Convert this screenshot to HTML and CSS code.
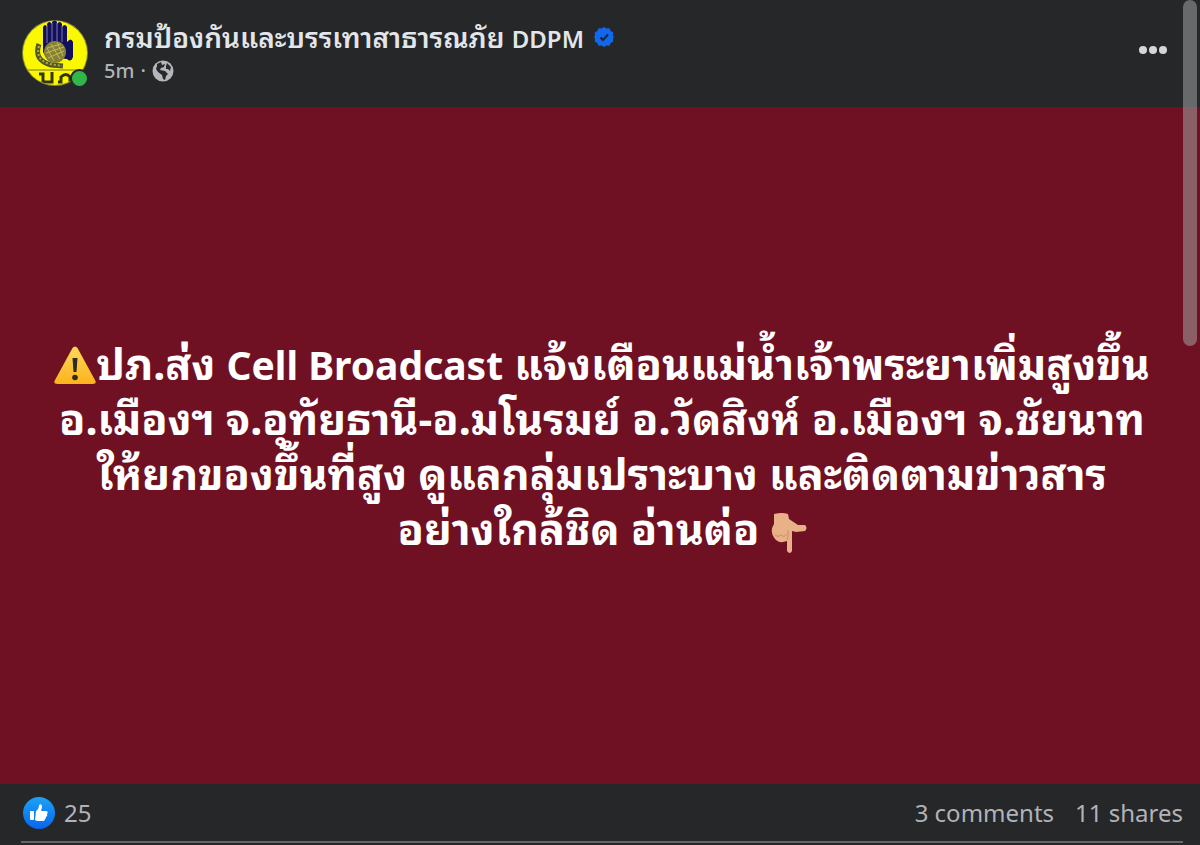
FILE: index.html
```
<!doctype html>
<html lang="th">
  <head>
    <meta charset="UTF-8" />
    <meta name="viewport" content="width=device-width, initial-scale=1.0" />
    <title>กรมป้องกันและบรรเทาสาธารณภัย DDPM</title>
    <link rel="stylesheet" href="styles.css">
  </head>
  <body>
    <article class="post">
      <header class="post-header">
        <a class="avatar" href="#" aria-label="DDPM">
          <svg viewBox="0 0 68 68" aria-hidden="true">
            <defs>
              <clipPath id="disc"><circle cx="34" cy="34" r="32" /></clipPath>
            </defs>
            <circle cx="34" cy="34" r="33" fill="#8b8a35" />
            <circle cx="34" cy="34" r="32" fill="#fbf900" />
            <!-- hand -->
            <path d="M22 33V8q2-4 4 0V5q2-4 5 0V3q3-3 5 0v2q3-4 5 0v3q3-4 5 0v15q4-5 6 0v15q-2 6-6 2L25 38z" fill="#12105c" />
            <path d="M26 6v18M31 4v19M36 4v18M41 7v16" stroke="#7c7ca8" stroke-width="1" />
            <!-- wreath -->
            <path d="M18 25q-6 16 12 21l12 1" fill="none" stroke="#55562a" stroke-width="5" />
            <path d="M18 27q-4 14 11 18l12 2" fill="none" stroke="#b3ad35" stroke-width="2" stroke-dasharray="2 2" />
            <circle cx="34" cy="33" r="11" fill="#85803a" />
            <path d="M26 29l14-4M25 34l18-6M27 39l16-7M30 25l9 15M36 23l6 14M26 29l7 13" stroke="#c4bb4d" stroke-width="1" />
            <g clip-path="url(#disc)">
              <path d="M3 51h62" stroke="#77762a" stroke-width="1" />
              <path d="M18 55h4v8h9V53M37 63h3v-5q5-5 9 0v6" fill="none" stroke="#35350b" stroke-width="3" />
            </g>
          </svg>
          <span class="online"></span>
        </a>
        <div class="author">
          <div class="name-row">
            <a class="name" href="#">กรมป้องกันและบรรเทาสาธารณภัย <span class="latin">DDPM</span></a>
            <svg class="verified" viewBox="0 0 20 20" aria-label="Verified">
              <path d="M10 0l2.500 1.500 3-.2 1.200 2.700 2.600 1.500-.3 3L20 10l-1 1.500.3 3-2.600 1.500-1.200 2.700-3-.2L10 20l-2.500-1.500-3 .2L3.300 16 .7 14.500l.3-3L0 10l1-1.500-.3-3L3.300 4l1.200-2.700 3 .2z" fill="#1267ed" />
              <path d="M6.500 10.500l2.500 2.500 5-5.500" fill="none" stroke="#202530" stroke-width="2" />
            </svg>
          </div>
          <div class="meta">
            <a href="#">5m</a>
            <span>·</span>
            <svg class="globe" viewBox="0 0 22 22" aria-label="Public">
              <circle cx="11" cy="11" r="10.500" fill="#b4b6ba" />
              <path d="M5 4l4-2 1 3 3-1-1 3-3 1-1 2 5 1 3 3-2 2-1 4-2-1-1-4-4-3-2-3 1-3z" fill="#26282a" />
              <path d="M15 3l4 4-1 4-2-2-2 0 0-3z" fill="#26282a" />
            </svg>
          </div>
        </div>
        <button class="more" type="button" aria-label="More">
          <svg viewBox="0 0 30 10" aria-hidden="true">
            <circle cx="5" cy="5" r="4" />
            <circle cx="15" cy="5" r="4" />
            <circle cx="25" cy="5" r="4" />
          </svg>
        </button>
      </header>

      <div class="message">
        <p>
          <svg class="emoji" viewBox="0 0 42 38" aria-label="Warning">
            <defs>
              <linearGradient id="amber" x1="0" y1="0" x2="0" y2="1">
                <stop offset="0" stop-color="#ffd95a" />
                <stop offset="1" stop-color="#fbb31c" />
              </linearGradient>
            </defs>
            <path d="M18.500 2q2.500-3 5 0l18 33q1 3-3 3h-35q-4 0-3-3z" fill="url(#amber)" />
            <path d="M18.500 12h5l-1 14h-3z" fill="#2f2b20" />
            <circle cx="21" cy="31.500" r="2.800" fill="#2f2b20" />
          </svg>ปภ.ส่ง <span class="latin">Cell Broadcast</span> แจ้งเตือนแม่น้ำเจ้าพระยาเพิ่มสูงขึ้น<br>
          อ.เมืองฯ จ.อุทัยธานี-อ.มโนรมย์ อ.วัดสิงห์ อ.เมืองฯ จ.ชัยนาท<br>
          ให้ยกของขึ้นที่สูง ดูแลกลุ่มเปราะบาง และติดตามข่าวสาร<br>
          อย่างใกล้ชิด อ่านต่อ
          <svg class="emoji hand" viewBox="0 0 36 42" aria-label="Pointing down">
            <path d="M3 1q8-2 14 0l1 5 9 6 7 0q3 3 0 6l-9 1-4-1 0 20q-2 4-5 0V28q-8 3-12-2Q-2 19 3 11z" fill="#e8b188" />
            <path d="M4 22q3 3 6 0q3 3 6-1M16 27q2-4 1-10" fill="none" stroke="#cf8d68" stroke-width="1" />
          </svg>
        </p>
      </div>

      <footer class="stats">
        <button class="likes" type="button">
          <svg viewBox="0 0 32 32" aria-label="Likes">
            <defs>
              <linearGradient id="like" x1="0" y1="0" x2="0" y2="1">
                <stop offset="0" stop-color="#1ba2f8" />
                <stop offset="1" stop-color="#0866ec" />
              </linearGradient>
            </defs>
            <circle cx="16" cy="16" r="16" fill="url(#like)" />
            <rect x="7" y="14" width="4" height="9" rx="1" fill="#fff" />
            <path d="M13 14q3-2 3-6 3-2 3 2l-1 4h5q3 1 1 3 1 2-1 3 0 2-1 2 0 2-3 2h-4q-2 0-3-1z" fill="#fff" />
          </svg>
          25
        </button>
        <div class="counts">
          <button type="button">3 comments</button>
          <button type="button">11 shares</button>
        </div>
      </footer>
    </article>
    <div class="scroll-thumb"></div>
  </body>
</html>
```
FILE: styles.css
```
* {
  box-sizing: border-box;
}

body {
  margin: 0;
  background: #252729;
  color: #e2e5e9;
  font-family: "Noto Sans", "Noto Sans Thai Looped", "Noto Looped Thai", Loma, Waree, sans-serif;
}

a {
  color: inherit;
  text-decoration: none;
}

button {
  padding: 0;
  border: none;
  background: none;
  color: inherit;
  font: inherit;
  cursor: pointer;
}

svg {
  display: block;
}

.post {
  display: flex;
  flex-direction: column;
  height: 100vh;
}

.post-header {
  display: flex;
  align-items: center;
  gap: 15px;
  padding: 19px 32px 19px 21px;
}

.avatar {
  position: relative;
  width: 68px;
  height: 69px;
}

.online {
  position: absolute;
  right: 0;
  bottom: 0;
  width: 19px;
  height: 19px;
  border: 2px solid #252729;
  border-radius: 50%;
  background: #31b64a;
}

.author {
  flex: 1;
}

.name-row,
.meta {
  display: flex;
  align-items: center;
}

.name-row {
  gap: 10px;
}

.name {
  font-size: 28px;
  line-height: 34px;
  font-weight: 600;
}

.latin {
  line-height: 1;
}

.name .latin {
  font-size: 24px;
}

.verified {
  width: 20px;
  height: 20px;
}

.meta {
  gap: 6px;
  color: #b0b3b8;
  font-size: 20px;
  line-height: 34px;
  font-weight: 500;
}

.globe {
  width: 22px;
  height: 22px;
}

.more {
  padding-bottom: 8px;
}

.more svg {
  width: 30px;
  height: 10px;
  fill: #d4d6d9;
}

.message {
  flex: 1;
  display: flex;
  align-items: center;
  justify-content: center;
  padding-left: 4px;
  background: #6f1122;
  color: #fff;
  text-align: center;
}

.message p {
  margin: 0;
  font-size: 43px;
  line-height: 55px;
  font-weight: 700;
  white-space: nowrap;
}

.message .latin {
  font-size: 39px;
}

.emoji {
  display: inline-block;
  width: 42px;
  height: 38px;
  vertical-align: -4px;
}

.hand {
  width: 36px;
  height: 42px;
  vertical-align: -10px;
}

.stats {
  display: flex;
  align-items: center;
  justify-content: space-between;
  height: 59px;
  margin: 0 17px 2px 21px;
  border-bottom: 2px solid #646668;
  color: #b0b3b8;
  font-size: 24px;
}

.likes {
  display: flex;
  align-items: center;
  gap: 9px;
  padding-left: 2px;
}

.likes svg {
  width: 32px;
  height: 32px;
}

.counts {
  display: flex;
  gap: 21px;
}

.scroll-thumb {
  position: absolute;
  top: 0;
  right: 3px;
  width: 14px;
  height: 346px;
  border-radius: 7px;
  background: rgba(160, 160, 160, 0.55);
}
```
